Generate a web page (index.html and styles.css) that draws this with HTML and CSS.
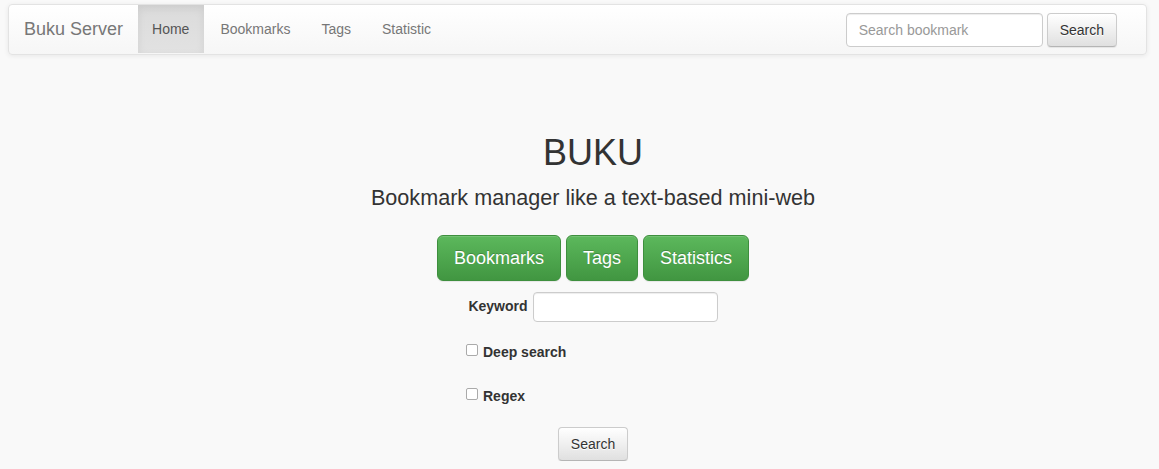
FILE: index.html
```html
<!DOCTYPE html>
<html>
<head>
<meta charset="utf-8">
<link rel="stylesheet" href="styles.css">
</head>
<body>
<nav class="navbar">
  <div class="nav-left">
    <a class="brand">Buku Server</a>
    <ul class="nav">
      <li class="active"><a>Home</a></li>
      <li><a>Bookmarks</a></li>
      <li><a>Tags</a></li>
      <li><a>Statistic</a></li>
    </ul>
  </div>
  <form class="nav-form">
    <input class="form-control nav-search" type="text" placeholder="Search bookmark">
    <button class="btn" type="button">Search</button>
  </form>
</nav>
<main class="main">
  <h1 class="title">BUKU</h1>
  <p class="lead">Bookmark manager like a text-based mini-web</p>
  <div class="btn-row">
    <a class="btn-lg">Bookmarks</a>
    <a class="btn-lg">Tags</a>
    <a class="btn-lg">Statistics</a>
  </div>
  <form class="search-form">
    <div class="kw-row">
      <label class="kw-label">Keyword</label>
      <input class="form-control kw-input" type="text">
    </div>
    <div class="checks">
      <label class="check"><span class="box"></span>Deep search</label>
      <label class="check"><span class="box"></span>Regex</label>
    </div>
    <button class="btn" type="button">Search</button>
  </form>
</main>
</body>
</html>
```
FILE: styles.css
```css
* { box-sizing: border-box; }
html, body { margin: 0; padding: 0; }
body {
  background: #f9f9f9;
  font-family: "Liberation Sans", Arial, sans-serif;
  font-size: 14px;
  color: #333;
  line-height: 1.42857;
}
.navbar {
  margin: 4px 12px 0 8px;
  height: 51px;
  border: 1px solid #e3e3e3;
  border-radius: 4px;
  background: linear-gradient(to bottom, #fff 0, #f6f6f6 100%);
  box-shadow: inset 0 1px 0 rgba(255,255,255,.15), 0 1px 5px rgba(0,0,0,.075);
  display: flex;
  justify-content: space-between;
  align-items: stretch;
}
.nav-left { display: flex; align-items: stretch; }
.brand {
  font-size: 18px;
  color: #777;
  padding: 0 15px;
  line-height: 49px;
}
.nav { list-style: none; margin: 0; padding: 0; display: flex; }
.nav li a {
  display: block;
  padding: 0 15px;
  line-height: 48px;
  color: #777;
}
.nav li.active a {
  color: #555;
  background: linear-gradient(to bottom, #dbdbdb 0, #e2e2e2 100%);
  box-shadow: inset 0 3px 9px rgba(0,0,0,.075);
  padding: 0 15px 0 14px;
}
.nav li:nth-child(2) a { padding: 0 15px 0 16px; }
.nav li:nth-child(3) a, .nav li:nth-child(4) a { padding: 0 15px 0 16px; }
.nav-form {
  display: flex;
  align-items: center;
  gap: 4px;
  margin: 0;
  padding: 0 29px 0 0;
}
.form-control {
  font-family: "Liberation Sans", Arial, sans-serif;
  font-size: 14px;
  color: #555;
  background: #fff;
  border: 1px solid #ccc;
  border-radius: 4px;
  box-shadow: inset 0 1px 1px rgba(0,0,0,.075);
  outline: none;
}
.nav-search {
  width: 197px;
  height: 34px;
  padding: 6px 12px;
}
.nav-search::placeholder { color: #999; }
.btn {
  font-family: "Liberation Sans", Arial, sans-serif;
  font-size: 14px;
  color: #333;
  height: 34px;
  padding: 6px 12px;
  border: 1px solid #ccc;
  border-color: #ccc #ccc #b5b5b5;
  border-radius: 4px;
  background: linear-gradient(to bottom, #fff 0, #e0e0e0 100%);
  text-shadow: 0 1px 0 #fff;
  box-shadow: inset 0 1px 0 rgba(255,255,255,.15), 0 1px 1px rgba(0,0,0,.075);
}
.main {
  padding: 78px 0 0 27px;
  display: flex;
  flex-direction: column;
  align-items: center;
}
.title {
  font-size: 36px;
  font-weight: 500;
  margin: 0;
  line-height: 40px;
  color: #333;
}
.lead {
  font-size: 21.6px;
  font-weight: 300;
  margin: 12px 0 0;
  line-height: 26px;
}
.btn-row {
  display: flex;
  gap: 5px;
  margin-top: 24px;
}
.btn-lg {
  font-size: 18px;
  color: #fff;
  line-height: 24px;
  padding: 10px 16px;
  border: 1px solid #3e8f3e;
  border-radius: 6px;
  background: linear-gradient(to bottom, #5cb85c 0, #419641 100%);
  text-shadow: 0 -1px 0 rgba(0,0,0,.2);
  box-shadow: inset 0 1px 0 rgba(255,255,255,.15), 0 1px 1px rgba(0,0,0,.075);
}
.search-form {
  margin-top: 11px;
  display: flex;
  flex-direction: column;
  align-items: center;
}
.kw-row { display: flex; align-items: center; gap: 5px; }
.kw-label { font-weight: bold; }
.kw-input { width: 185px; height: 30px; }
.checks {
  width: 254px;
  display: flex;
  flex-direction: column;
  gap: 24px;
  margin-top: 20px;
}
.check {
  font-weight: bold;
  display: flex;
  align-items: center;
  line-height: 20px;
}
.box {
  width: 12px;
  height: 12px;
  border: 1px solid #aaa;
  border-radius: 2px;
  background: #fff;
  margin-right: 5px;
  position: relative;
  top: -2px;
}
.search-form .btn { margin-top: 21px; }
```
